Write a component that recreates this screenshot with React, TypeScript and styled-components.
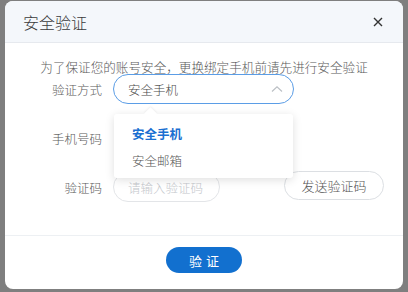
import styled, { createGlobalStyle } from 'styled-components';

const GlobalStyle = createGlobalStyle`
  html, body {
    margin: 0;
    padding: 0;
    background: #7f7f7f;
    font-family: "Noto Sans CJK SC", "Noto Sans", sans-serif;
  }
`;

const Page = styled.div`
  width: 408px;
  height: 292px;
  overflow: hidden;
  padding: 1px 5px 0;
  box-sizing: border-box;
`;

const Modal = styled.div`
  width: 398px;
  height: 288px;
  background: #fff;
  border-radius: 8px;
  overflow: hidden;
  display: flex;
  flex-direction: column;
`;

const Header = styled.div`
  height: 41px;
  display: flex;
  align-items: center;
  justify-content: space-between;
  padding: 0 19px 0 18px;
  background: #f4f7fb;
  border-bottom: 1px solid #e6e9ee;
`;

const Title = styled.span`
  font-size: 16px;
  font-weight: 300;
  color: #3a3a3a;
`;

const Close = styled.button`
  border: 0;
  background: none;
  padding: 0;
  width: 12px;
  height: 12px;
  display: flex;
  cursor: pointer;
`;

const Body = styled.div`
  flex: 1;
  padding-top: 16px;
  border-bottom: 1px solid #edf0f3;
`;

const Hint = styled.p`
  margin: 0;
  text-align: center;
  font-size: 12.6px;
  font-weight: 300;
  line-height: 15px;
  color: #5a5a5a;
`;

const Form = styled.div`
  display: flex;
  flex-direction: column;
  gap: 19px;
`;

const Row = styled.div`
  display: flex;
  align-items: center;
  height: 30px;
`;

const Label = styled.span`
  width: 97px;
  margin-right: 11px;
  text-align: right;
  font-size: 12.5px;
  font-weight: 300;
  color: #5a5a5a;
`;

const SelectWrap = styled.div`
  position: relative;
`;

const Select = styled.div`
  width: 181px;
  height: 30px;
  box-sizing: border-box;
  border: 1px solid #5b9de6;
  border-radius: 15px;
  display: flex;
  align-items: center;
  justify-content: space-between;
  padding: 0 10px 0 14px;
  font-size: 12.5px;
  font-weight: 300;
  color: #4a4a4a;
`;

const Dropdown = styled.ul`
  position: absolute;
  top: 40px;
  left: 1px;
  width: 179px;
  margin: 0;
  padding: 6px 0 4px;
  list-style: none;
  background: #fff;
  border-radius: 3px;
  box-shadow: 0 2px 10px rgba(0, 0, 0, 0.13);
  z-index: 2;

  &::before {
    content: '';
    position: absolute;
    top: -5px;
    left: 32px;
    width: 9px;
    height: 9px;
    background: #fff;
    transform: rotate(45deg);
    box-shadow: -1px -1px 2px rgba(0, 0, 0, 0.05);
  }
`;

const Option = styled.li<{ $active?: boolean }>`
  height: 27px;
  line-height: 27px;
  padding-left: 18px;
  font-size: 12.5px;
  color: ${(p) => (p.$active ? '#1a6fd1' : '#555')};
  font-weight: ${(p) => (p.$active ? 700 : 300)};
`;

const Value = styled.span`
  font-size: 12.5px;
  color: #4a4a4a;
`;

const Input = styled.input<{ $width: number }>`
  width: ${(p) => p.$width}px;
  height: 30px;
  box-sizing: border-box;
  border: 1px solid #e3e5e8;
  border-radius: 15px;
  padding: 0 14px;
  font-family: inherit;
  font-size: 12.5px;
  font-weight: 300;
  color: #444;
  outline: none;

  &::placeholder {
    color: #c4c7cc;
  }
`;

const SendButton = styled.button`
  margin-left: 64px;
  margin-top: -4px;
  width: 100px;
  height: 29px;
  border: 1px solid #dcdfe3;
  border-radius: 15px;
  background: #fff;
  font-family: inherit;
  font-size: 13px;
  font-weight: 300;
  color: #555;
`;

const Footer = styled.div`
  height: 53px;
  display: flex;
  justify-content: center;
  padding-top: 11px;
  box-sizing: border-box;
`;

const Submit = styled.button`
  width: 76px;
  height: 26px;
  border: 0;
  border-radius: 13px;
  background: #1270cf;
  color: #fff;
  font-family: inherit;
  font-size: 13px;
  letter-spacing: 4px;
  text-indent: 4px;
`;

export default function App() {
  return (
    <>
      <GlobalStyle />
      <Page>
        <Modal>
          <Header>
            <Title>安全验证</Title>
            <Close aria-label="关闭">
              <svg width="12" height="12" viewBox="0 0 12 12">
                <path d="M2 2L10 10M10 2L2 10" stroke="#333" strokeWidth="1.4" />
              </svg>
            </Close>
          </Header>
          <Body>
            <Hint>为了保证您的账号安全，更换绑定手机前请先进行安全验证</Hint>
            <Form>
              <Row>
                <Label>验证方式</Label>
                <SelectWrap>
                  <Select>
                    <span>安全手机</span>
                    <svg width="12" height="8" viewBox="0 0 12 8">
                      <path d="M1 6.5L6 1.8L11 6.5" fill="none" stroke="#bcc0c5" strokeWidth="1.2" />
                    </svg>
                  </Select>
                  <Dropdown>
                    <Option $active>安全手机</Option>
                    <Option>安全邮箱</Option>
                  </Dropdown>
                </SelectWrap>
              </Row>
              <Row>
                <Label>手机号码</Label>
                <Value />
              </Row>
              <Row>
                <Label>验证码</Label>
                <Input $width={107} placeholder="请输入验证码" />
                <SendButton>发送验证码</SendButton>
              </Row>
            </Form>
          </Body>
          <Footer>
            <Submit>验证</Submit>
          </Footer>
        </Modal>
      </Page>
    </>
  );
}
